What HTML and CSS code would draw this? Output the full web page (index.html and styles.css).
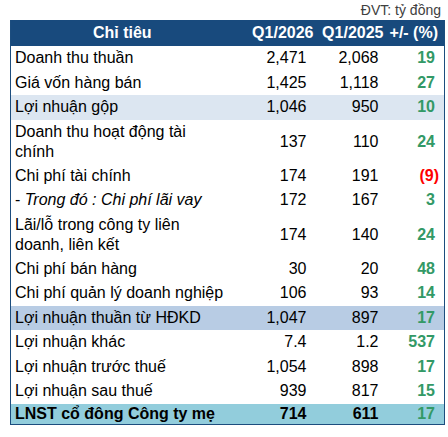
FILE: index.html
```html
<!DOCTYPE html>
<html lang="vi">
<head>
    <meta charset="UTF-8">
    <title>Kết quả kinh doanh Q1/2026</title>
    <link rel="stylesheet" href="styles.css">
</head>
<body>
    <div class="wrap">
        <div class="unit">ĐVT: tỷ đồng</div>
        <table class="report">
            <colgroup>
                <col class="c-name">
                <col class="c-cur">
                <col class="c-prev">
                <col class="c-pct">
            </colgroup>
            <thead>
                <tr>
                    <th class="h-name">Chỉ tiêu</th>
                    <th class="h-cur">Q1/2026</th>
                    <th class="h-prev">Q1/2025</th>
                    <th class="h-pct">+/- (%)</th>
                </tr>
            </thead>
            <tbody>
                <tr>
                    <td class="name">Doanh thu thuần</td>
                    <td class="cur">2,471</td><td class="prev">2,068</td><td class="pct">19</td>
                </tr>
                <tr>
                    <td class="name">Giá vốn hàng bán</td>
                    <td class="cur">1,425</td><td class="prev">1,118</td><td class="pct">27</td>
                </tr>
                <tr class="light">
                    <td class="name">Lợi nhuận gộp</td>
                    <td class="cur">1,046</td><td class="prev">950</td><td class="pct">10</td>
                </tr>
                <tr class="double">
                    <td class="name">Doanh thu hoạt động tài<br>chính</td>
                    <td class="cur">137</td><td class="prev">110</td><td class="pct">24</td>
                </tr>
                <tr>
                    <td class="name">Chi phí tài chính</td>
                    <td class="cur">174</td><td class="prev">191</td><td class="pct neg">(9)</td>
                </tr>
                <tr>
                    <td class="name">- <i>Trong đó : Chi phí lãi vay</i></td>
                    <td class="cur">172</td><td class="prev">167</td><td class="pct">3</td>
                </tr>
                <tr class="double">
                    <td class="name">Lãi/lỗ trong công ty liên<br>doanh, liên kết</td>
                    <td class="cur">174</td><td class="prev">140</td><td class="pct">24</td>
                </tr>
                <tr>
                    <td class="name">Chi phí bán hàng</td>
                    <td class="cur">30</td><td class="prev">20</td><td class="pct">48</td>
                </tr>
                <tr>
                    <td class="name">Chi phí quản lý doanh nghiệp</td>
                    <td class="cur">106</td><td class="prev">93</td><td class="pct">14</td>
                </tr>
                <tr class="mid">
                    <td class="name">Lợi nhuận thuần từ HĐKD</td>
                    <td class="cur">1,047</td><td class="prev">897</td><td class="pct">17</td>
                </tr>
                <tr>
                    <td class="name">Lợi nhuận khác</td>
                    <td class="cur">7.4</td><td class="prev">1.2</td><td class="pct">537</td>
                </tr>
                <tr>
                    <td class="name">Lợi nhuận trước thuế</td>
                    <td class="cur">1,054</td><td class="prev">898</td><td class="pct">17</td>
                </tr>
                <tr>
                    <td class="name">Lợi nhuận sau thuế</td>
                    <td class="cur">939</td><td class="prev">817</td><td class="pct">15</td>
                </tr>
                <tr class="total">
                    <td class="name">LNST cổ đông Công ty mẹ</td>
                    <td class="cur">714</td><td class="prev">611</td><td class="pct">17</td>
                </tr>
            </tbody>
        </table>
    </div>
</body>
</html>
```

FILE: styles.css
```css
body {
    margin: 0;
    background: #ffffff;
    font-family: "Liberation Sans", Arial, sans-serif;
    color: #000000;
}
.wrap {
    width: 448px;
    padding-left: 10px;
    box-sizing: border-box;
}
.unit {
    height: 20px;
    line-height: 20px;
    font-size: 14px;
    color: #404040;
    text-align: right;
    padding-right: 7px;
}

/* Table */
.report {
    width: 434px;
    table-layout: fixed;
    border-collapse: collapse;
    border: 1px solid #1c4d7e;
    border-top: none;
    font-size: 16px;
}
.c-name { width: 223px; }
.c-cur { width: 83px; }
.c-prev { width: 70px; }
.c-pct { width: 58px; }

.report th {
    background: #184a7d;
    color: #ffffff;
    font-weight: bold;
    height: 26px;
    padding: 0;
    line-height: 26px;
    white-space: nowrap;
}
.h-name { text-align: center; }
.h-cur { text-align: right; padding-right: 3px !important; }
.h-prev { text-align: right; padding-right: 3px !important; }
.h-pct { text-align: right; padding-right: 6px !important; }

.report td {
    height: 24.5px;
    padding: 0;
    line-height: 20px;
    vertical-align: middle;
}
.report tr.double td { height: 44px; }
.report tr.total td { height: 20px; }

.name { padding-left: 4px !important; }
.cur { text-align: right; padding-right: 10px !important; }
.prev { text-align: right; padding-right: 8px !important; }
.pct {
    text-align: right;
    font-weight: bold;
    color: #339966;
    padding-right: 9px !important;
}
.pct.neg {
    color: #ff0000;
    padding-right: 5px !important;
}

.light td { background: #dce6f1; }
.mid td { background: #b8cce4; }
.total td {
    background: #92cddc;
    font-weight: bold;
}
```
